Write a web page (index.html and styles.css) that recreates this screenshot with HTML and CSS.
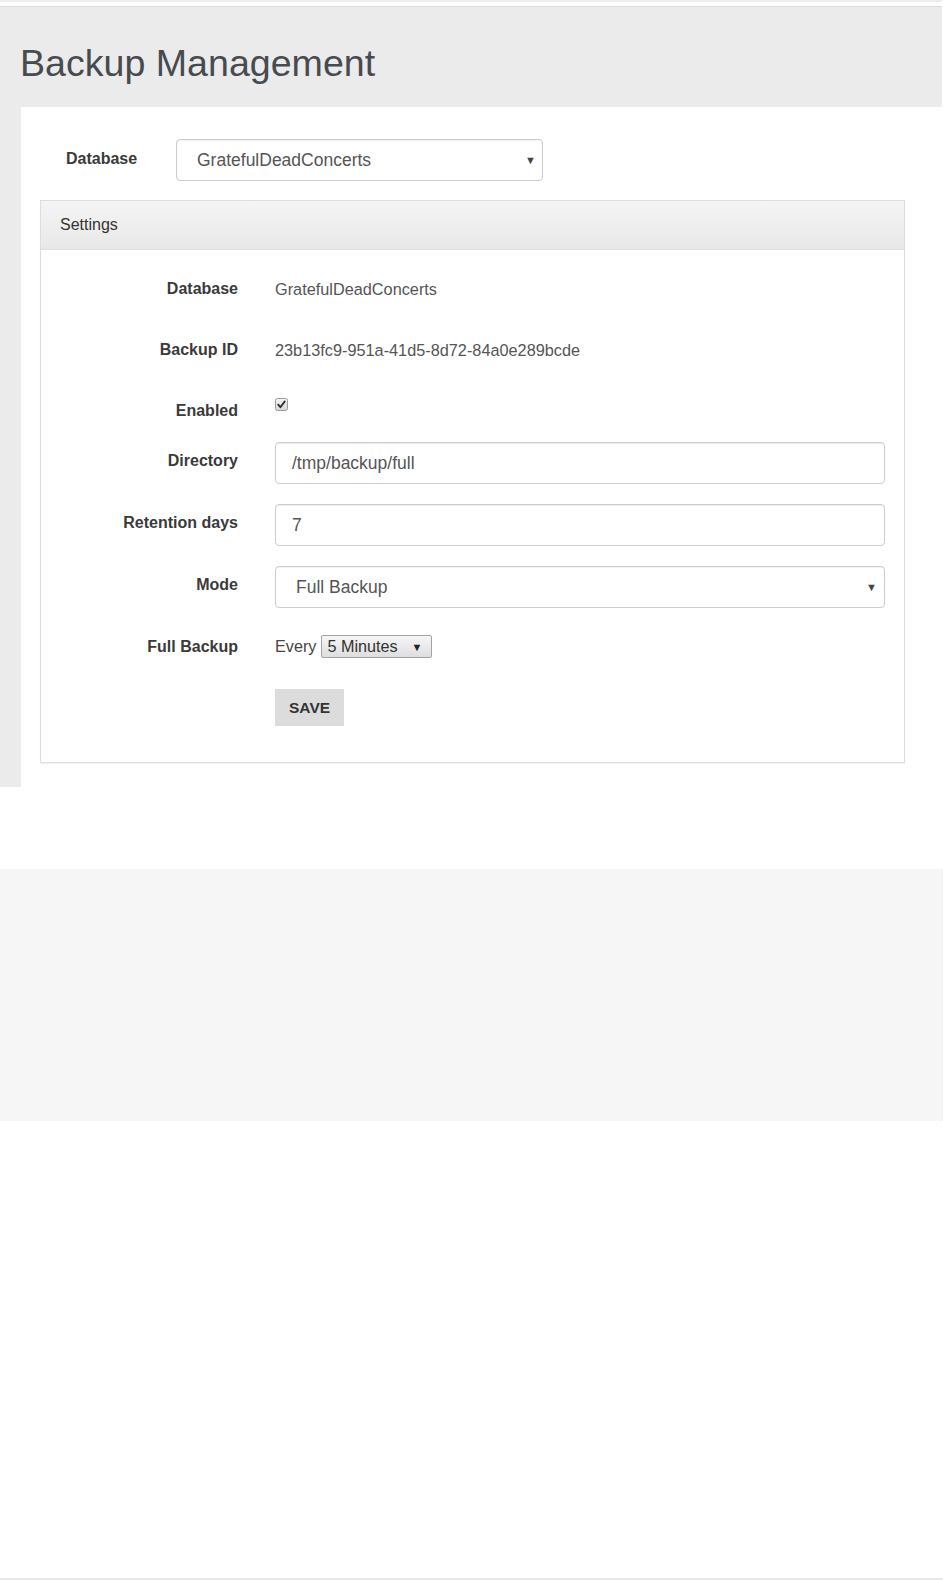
FILE: index.html
```html
<!DOCTYPE html>
<html lang="en">
<head>
<meta charset="utf-8">
<title>Backup Management</title>
<link rel="stylesheet" href="styles.css">
</head>
<body>
<div class="topline"></div>
<div class="app">
  <header class="page-head">
    <h1 class="page-title">Backup Management</h1>
  </header>
  <main class="content">
    <div class="db-picker">
      <span class="db-label">Database</span>
      <div class="fake-select fake-select-top">
        <span>GratefulDeadConcerts</span>
        <span class="caret">&#9660;</span>
      </div>
    </div>
    <section class="panel">
      <div class="panel-heading">Settings</div>
      <div class="panel-body">
        <div class="form-row">
          <div class="row-label">Database</div>
          <div class="row-value static">GratefulDeadConcerts</div>
        </div>
        <div class="form-row">
          <div class="row-label">Backup ID</div>
          <div class="row-value static">23b13fc9-951a-41d5-8d72-84a0e289bcde</div>
        </div>
        <div class="form-row row-check">
          <div class="row-label">Enabled</div>
          <div class="row-value check-wrap">
            <svg class="checkbox" width="13" height="13" viewBox="0 0 13 13">
              <defs>
                <linearGradient id="cbg" x1="0" y1="0" x2="0" y2="1">
                  <stop offset="0" stop-color="#f4f4f4"/>
                  <stop offset="1" stop-color="#d8d8d8"/>
                </linearGradient>
              </defs>
              <rect x="0.5" y="0.5" width="12" height="12" rx="2" fill="url(#cbg)" stroke="#9a9a9a"/>
              <path d="M3.2 6.6 L5.4 9.2 L9.8 3.4" fill="none" stroke="#2e2e2e" stroke-width="1.8" stroke-linecap="round" stroke-linejoin="round"/>
            </svg>
          </div>
        </div>
        <div class="form-row">
          <div class="row-label">Directory</div>
          <div class="row-value">
            <div class="text-input">/tmp/backup/full</div>
          </div>
        </div>
        <div class="form-row">
          <div class="row-label">Retention days</div>
          <div class="row-value">
            <div class="text-input">7</div>
          </div>
        </div>
        <div class="form-row">
          <div class="row-label">Mode</div>
          <div class="row-value">
            <div class="fake-select fake-select-mode">
              <span>Full Backup</span>
              <span class="caret">&#9660;</span>
            </div>
          </div>
        </div>
        <div class="form-row row-every">
          <div class="row-label">Full Backup</div>
          <div class="row-value every">
            <span>Every</span>
            <div class="mini-select">
              <span>5 Minutes</span>
              <span class="mini-caret">&#9660;</span>
            </div>
          </div>
        </div>
        <div class="form-row row-last">
          <div class="row-label"></div>
          <div class="row-value">
            <button class="save-btn" type="button">SAVE</button>
          </div>
        </div>
      </div>
    </section>
  </main>
</div>
<div class="gap-white"></div>
<div class="band"></div>
<div class="bottom-white"></div>
<div class="bottom-line"></div>
</body>
</html>
```

FILE: styles.css
```css
* {
  box-sizing: border-box;
}

html, body {
  margin: 0;
  padding: 0;
  background: #ffffff;
}

body {
  font-family: "Liberation Sans", Arial, sans-serif;
  font-size: 16px;
  color: #333333;
}

.topline {
  height: 2px;
  background: #eeeeee;
  margin-right: 1px;
  margin-bottom: 4px;
}

.app {
  background: #ebebeb;
  border-top: 1px solid #dcdcdc;
  margin-right: 1px;
}

.page-head {
  height: 100px;
  padding: 35px 0 0 20px;
}

.page-title {
  margin: 0;
  font-size: 37.6px;
  line-height: 42px;
  font-weight: normal;
  color: #474b4f;
}

.content {
  margin-left: 21px;
  margin-right: -1px;
  background: #ffffff;
  padding-top: 32px;
  padding-bottom: 24px;
}

.db-picker {
  display: flex;
  align-items: flex-start;
  padding-left: 45px;
}

.db-label {
  width: 110px;
  padding-top: 10px;
  line-height: 20px;
  font-weight: bold;
  color: #3a3a3a;
}

.fake-select {
  display: flex;
  align-items: center;
  justify-content: space-between;
  height: 42px;
  border: 1px solid #cccccc;
  border-radius: 4px;
  background: #ffffff;
  font-size: 17.5px;
  color: #555555;
  box-shadow: inset 0 1px 1px rgba(0, 0, 0, 0.05);
}

.fake-select-top {
  width: 367px;
  padding: 0 6px 0 20px;
}

.fake-select-mode {
  width: 100%;
  padding: 0 7px 0 20px;
}

.caret {
  font-size: 11px;
  color: #444444;
}

.panel {
  margin: 19px 38px 0 19px;
  border: 1px solid #dddddd;
  box-shadow: 0 1px 1px rgba(0, 0, 0, 0.05);
  background: #ffffff;
}

.panel-heading {
  height: 49px;
  padding: 14px 0 0 19px;
  line-height: 20px;
  border-bottom: 1px solid #dddddd;
  background: linear-gradient(to bottom, #f5f5f5 0%, #e8e8e8 100%);
  color: #333333;
}

.panel-body {
  padding: 20px 19px 36px 0;
}

.form-row {
  display: flex;
  align-items: flex-start;
  margin-bottom: 20px;
}

.row-last {
  margin-bottom: 0;
}

.row-label {
  width: 197px;
  margin-right: 37px;
  padding-top: 9px;
  line-height: 20px;
  text-align: right;
  font-weight: bold;
  color: #3a3a3a;
}

.row-value {
  flex: 1;
}

.static {
  min-height: 41px;
  padding-top: 9px;
  line-height: 20px;
  font-size: 16.3px;
  color: #555555;
}

.row-check {
  height: 30px;
}

.check-wrap {
  padding-top: 6px;
  height: 30px;
}

.checkbox {
  display: block;
}

.text-input {
  height: 42px;
  display: flex;
  align-items: center;
  padding-left: 16px;
  border: 1px solid #cccccc;
  border-radius: 4px;
  font-size: 17.5px;
  color: #555555;
  box-shadow: inset 0 1px 1px rgba(0, 0, 0, 0.075);
}

.row-every {
  min-height: 41px;
}

.every {
  display: flex;
  align-items: center;
  gap: 5px;
  padding-top: 7px;
  font-size: 16.2px;
  color: #444444;
}

.mini-select {
  display: flex;
  align-items: center;
  justify-content: space-between;
  width: 111px;
  height: 23px;
  padding: 0 9px 0 5px;
  border: 1px solid #a2a2a2;
  border-radius: 2px;
  background: linear-gradient(to bottom, #f6f6f6 0%, #dedede 100%);
  color: #333333;
}

.mini-caret {
  font-size: 11px;
  color: #222222;
}

.save-btn {
  display: block;
  height: 37px;
  padding: 0 14px;
  border: none;
  border-radius: 0;
  background: #dcdcdc;
  font-family: "Liberation Sans", Arial, sans-serif;
  font-size: 15.5px;
  font-weight: bold;
  color: #333333;
}

.gap-white {
  height: 82px;
}

.band {
  height: 252px;
  background: #f6f6f6;
  border-right: 1px solid #efefef;
}

.bottom-white {
  height: 457px;
}

.bottom-line {
  height: 2px;
  background: #e8e8e8;
}
```
